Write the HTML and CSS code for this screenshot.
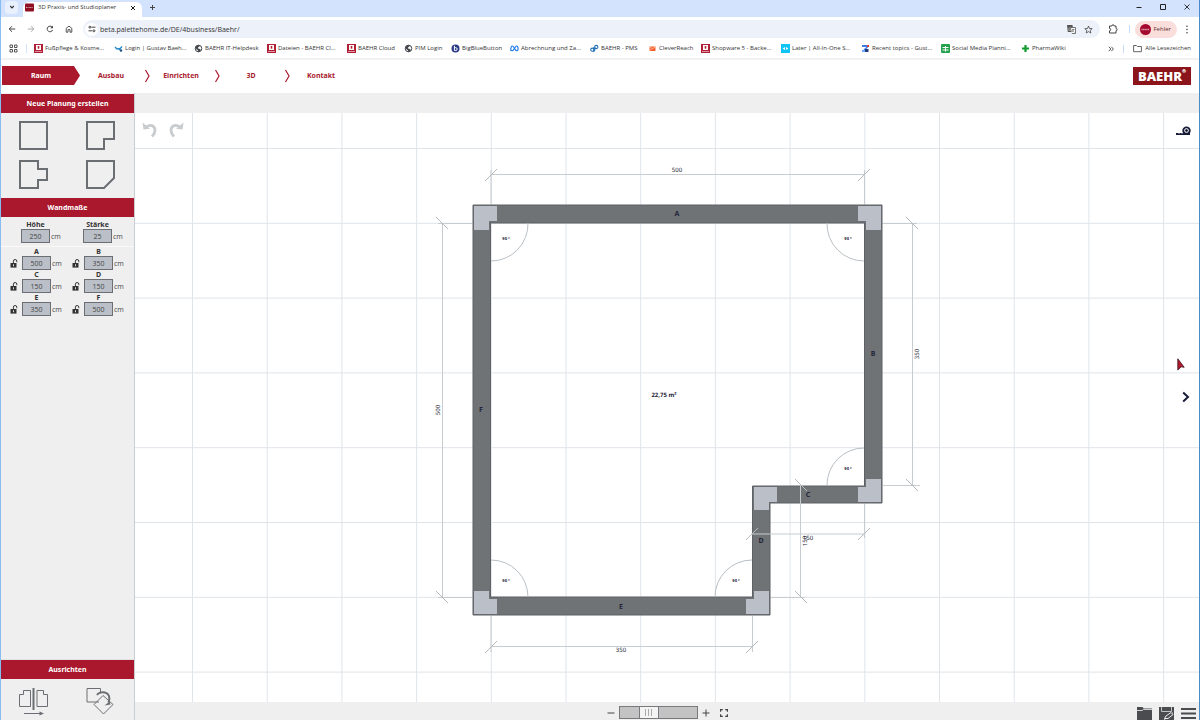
FILE: index.html
```html
<!DOCTYPE html>
<html lang="de">
<head>
  <meta charset="UTF-8" />
  <meta name="viewport" content="width=device-width, initial-scale=1.0" />
  <title>3D Praxis- und Studioplaner</title>
  <link rel="stylesheet" href="styles.css">
</head>
<body>
  <!-- shared icons -->
  <svg class="defs" width="0" height="0" aria-hidden="true">
    <symbol id="lock" viewBox="0 0 8 9"><path d="M3.4 4V2.2a1.7 1.7 0 0 1 3.4 0v1" fill="none" stroke="#333" stroke-width="1"/><path d="M.5 4h6v4.6h-6z" fill="#333"/><path d="M3 5.3h1v2H3z" fill="#ddd"/></symbol>
    <symbol id="baehr" viewBox="0 0 9 9"><path d="M0 0h9v9H0z" fill="#b01e36"/><path d="M2 1h5v5H2z" fill="#fff"/><path d="M3.7 2h1.6v2.7H3.7z" fill="#b01e36"/><path d="M1 7.5h7" stroke="#e6b5bc" stroke-width=".8"/></symbol>
    <symbol id="globe" viewBox="0 0 9 9"><circle cx="4.5" cy="4.5" r="3.3" fill="#fff" stroke="#45484d" stroke-width="1"/><path d="M1 3.5l2-2 2.3-.4.4 1.2-1.5.9-.2 1.2 2 .5.8 1.1-1.2 1.7-1.6.4-.1-1.8L2 5z" fill="#45484d"/></symbol>
    <symbol id="chevron" viewBox="0 0 8 14"><path d="M3.5 1L7 7l-3.5 6" fill="none" stroke="#a81a2d" stroke-width="1.2"/></symbol>
  </svg>

  <div class="tabs">
    <button class="tab-search" aria-label="Tabs durchsuchen"><svg width="6" height="6" viewBox="0 0 6 6"><path d="M1.2 2L3 3.9 4.8 2" fill="none" stroke="#333" stroke-width="1.1"/></svg></button>
    <div class="tab">
      <svg width="9" height="9" viewBox="0 0 9 9"><rect width="9" height="8" y=".5" rx="1" fill="#8e1024"/><path d="M1 4.5h7" stroke="#d9a0a8" stroke-width="1" stroke-dasharray="1 .4"/></svg>
      <span>3D Praxis- und Studioplaner</span>
      <button aria-label="Tab schließen"><svg width="6" height="6" viewBox="0 0 6 6"><path d="M1 1l4 4M5 1L1 5" stroke="#222" stroke-width="1"/></svg></button>
    </div>
    <button class="new-tab" aria-label="Neuer Tab"><svg width="7" height="7" viewBox="0 0 7 7"><path d="M3.5 1v5M1 3.5h5" stroke="#444" stroke-width="1"/></svg></button>
    <div class="win-buttons">
      <button aria-label="Minimieren"><svg width="8" height="8" viewBox="0 0 8 8"><path d="M1.5 4.5h5" stroke="#222"/></svg></button>
      <button aria-label="Maximieren"><svg width="8" height="8" viewBox="0 0 8 8"><path d="M1.5 1.5h5v5h-5z" fill="none" stroke="#222"/></svg></button>
      <button aria-label="Schließen"><svg width="8" height="8" viewBox="0 0 8 8"><path d="M1.5 1.5l5 5M6.5 1.5l-5 5" stroke="#222" stroke-width=".9"/></svg></button>
    </div>
  </div>

  <div class="toolbar">
    <button aria-label="Zurück"><svg width="8" height="8" viewBox="0 0 8 8"><path d="M7.2 4H1.3M4 1.2L1.2 4 4 6.8" fill="none" stroke="#444"/></svg></button>
    <button aria-label="Vor"><svg width="8" height="8" viewBox="0 0 8 8"><path d="M.8 4h5.9M4 1.2L6.8 4 4 6.8" fill="none" stroke="#aaa"/></svg></button>
    <button aria-label="Neu laden"><svg width="8" height="8" viewBox="0 0 8 8"><path d="M6.6 5A2.8 2.8 0 1 1 6.2 2.2" fill="none" stroke="#444"/><path d="M7 .6v2.7H4.3z" fill="#444"/></svg></button>
    <button aria-label="Startseite"><svg width="8" height="8" viewBox="0 0 8 8"><path d="M1.2 7.2V3.3L4 1.1l2.8 2.2v3.9H5V4.6H3v2.6z" fill="none" stroke="#444" stroke-width=".9"/></svg></button>
    <div class="address">
      <button class="site" aria-label="Website-Informationen"><svg width="8" height="8" viewBox="0 0 8 8"><g fill="none" stroke="#444"><path d="M3.5 2.2h4M.5 5.8H4"/><circle cx="1.9" cy="2.2" r="1"/><circle cx="5.9" cy="5.8" r="1"/></g></svg></button>
      <input type="text" aria-label="Adresse" value="beta.palettehome.de/DE/4business/Baehr/">
      <button aria-label="Übersetzen"><svg width="9" height="9" viewBox="0 0 9 9"><path d="M0 0h5.5l1 7H.8z" fill="#555"/><path d="M4 2.5h4.5v6H4.8" fill="#fff" stroke="#555" stroke-width=".8"/><path d="M4.4 3H1.8v2.5h2V4.3H3" fill="none" stroke="#ccc" stroke-width=".6"/><path d="M5 4.5h2.6M6.3 3.8v.8L5.1 7.2M5.5 5.3l2 1.9" fill="none" stroke="#555" stroke-width=".6"/></svg></button>
      <button aria-label="Lesezeichen"><svg width="9" height="9" viewBox="0 0 9 9"><path d="M4.5 1l1 2.5 2.7.2-2 1.7.6 2.6-2.3-1.4L2.2 8l.6-2.6-2-1.7 2.7-.2z" fill="none" stroke="#444" stroke-width=".8"/></svg></button>
    </div>
    <button class="extensions" aria-label="Erweiterungen"><svg width="10" height="10" viewBox="0 0 10 10"><path d="M1.5 2h2.3a1.2 1.2 0 0 1 2.4 0H8v2.500a1 1 0 0 1 0 2.200V9H1.500V6.800a1.200 1.200 0 0 0 0-2.400z" fill="none" stroke="#444" stroke-width="1"/></svg></button>
    <span class="divider"></span>
    <button class="profile"><svg width="11" height="11" viewBox="0 0 11 11"><circle cx="5.5" cy="5.5" r="5.5" fill="#a5062f"/><path d="M1.5 5.5h8" stroke="#dda0ae" stroke-width="1.4" stroke-dasharray="1.2 .4"/></svg>Fehler</button>
    <button class="menu" aria-label="Menü"><svg width="4" height="9" viewBox="0 0 4 9"><g fill="#444"><circle cx="2" cy="1.3" r=".8"/><circle cx="2" cy="4.5" r=".8"/><circle cx="2" cy="7.7" r=".8"/></g></svg></button>
  </div>

  <div class="bookmarks">
    <button class="apps" aria-label="Apps"><svg width="9" height="9" viewBox="0 0 9 9"><path d="M1 1h2.5v2.5H1zM5.5 1H8v2.5H5.5zM1 5.5h2.5V8H1zM5.5 5.5H8V8H5.5z" fill="none" stroke="#555" stroke-width="1"/></svg></button>
    <nav class="bookmark-list" aria-label="Lesezeichen">
      <a href="#"><svg width="9" height="9"><use href="#baehr"/></svg>Fußpflege &amp; Kosme...</a>
      <a href="#"><svg width="9" height="9" viewBox="0 0 9 9"><path d="M1 3l2 2 2.5-.5M5 6l3-3.5" fill="none" stroke="#2289c9" stroke-width="1.3"/><circle cx="7" cy="6.5" r="1.2" fill="#1a4f80"/></svg>Login | Gustav Baeh...</a>
      <a href="#"><svg width="9" height="9"><use href="#globe"/></svg>BAEHR IT-Helpdesk</a>
      <a href="#"><svg width="9" height="9"><use href="#baehr"/></svg>Dateien - BAEHR Cl...</a>
      <a href="#"><svg width="9" height="9"><use href="#baehr"/></svg>BAEHR Cloud</a>
      <a href="#"><svg width="9" height="9"><use href="#globe"/></svg>PIM Login</a>
      <a href="#"><svg width="9" height="9" viewBox="0 0 9 9"><circle cx="4.5" cy="4.5" r="4" fill="#2b3a87"/><path d="M3.4 1.8v4.7h1.4a1.4 1.4 0 0 0 0-2.8H3.4" fill="none" stroke="#fff" stroke-width="1"/></svg>BigBlueButton</a>
      <a href="#"><svg width="9" height="9" viewBox="0 0 9 9"><path d="M.7 6.3C.7 3.5 1.5 2 2.5 2c1.5 0 2.5 4.8 4.3 4.8 1.9 0 1.6-4.8-.3-4.8C5 2 4 6.8 2.2 6.8c-1 0-1.500-.2-1.500-1.300" fill="none" stroke="#1272e6" stroke-width="1.1"/></svg>Abrechnung und Za...</a>
      <a href="#"><svg width="9" height="9" viewBox="0 0 9 9"><g fill="none" stroke="#2471b5" stroke-width="1.1"><circle cx="2.3" cy="5.7" r="1.6"/><circle cx="6.3" cy="3" r="1.6"/><path d="M3.9 5.5V3M4.7 3.5v2.8L3.5 8"/></g></svg>BAEHR - PMS</a>
      <a href="#"><svg width="9" height="9" viewBox="0 0 9 9"><path d="M1.5 2.5h6V7h-6z" fill="#f4602c"/><path d="M1.5 3l3 1.6 3-1.6M1.5 6.5l2-1.5" fill="none" stroke="#ffd0be" stroke-width=".7"/></svg>CleverReach</a>
      <a href="#"><svg width="9" height="9"><use href="#baehr"/></svg>Shopware 5 - Backe...</a>
      <a href="#"><svg width="9" height="9" viewBox="0 0 9 9"><path d="M0 0h9v9H0z" fill="#10c4f5"/><path d="M4 3L1.6 4.5 4 6M5 3l2.400 1.500L5 6" fill="#fff"/></svg>Later | All-In-One S...</a>
      <a href="#"><svg width="9" height="9" viewBox="0 0 9 9"><path d="M1 1h5v2H1z" fill="#3f7ee8"/><path d="M6 1h2v2H6z" fill="#e2382e"/><path d="M6.5 3L3 6" stroke="#3f7ee8" stroke-width="1.6"/><path d="M1 6h3v2H1z" fill="#6ca8ff"/><path d="M4 5h3.5v3H4z" fill="#243c7c"/></svg>Recent topics - Gust...</a>
      <a href="#"><svg width="9" height="9" viewBox="0 0 9 9"><rect width="9" height="9" rx="1" fill="#23a14c"/><path d="M1.5 3.5h6M1.5 6h6M4.5 2v5.5" stroke="#fff" stroke-width="1"/></svg>Social Media Planni...</a>
      <a href="#"><svg width="9" height="9" viewBox="0 0 9 9"><path d="M4.5 1v7M1 4.5h7" stroke="#119b2e" stroke-width="2.2"/></svg>PharmaWiki</a>
    </nav>
    <button class="more" aria-label="Weitere Lesezeichen"><svg width="6" height="6" viewBox="0 0 6 6"><path d="M.8.8L2.9 3 .8 5.2M3.3.8L5.4 3 3.3 5.2" fill="none" stroke="#444" stroke-width=".9"/></svg></button>
    <span class="divider"></span>
    <a class="all-bookmarks" href="#"><svg width="9" height="9" viewBox="0 0 9 9"><path d="M.6 1.5h2.8l1 1h4v5.2H.6z" fill="none" stroke="#555" stroke-width=".9"/></svg>Alle Lesezeichen</a>
  </div>

  <header class="header">
    <nav class="steps">
      <a class="active" href="#">Raum</a>
      <a href="#">Ausbau</a>
      <svg width="8" height="14"><use href="#chevron"/></svg>
      <a href="#">Einrichten</a>
      <svg width="8" height="14"><use href="#chevron"/></svg>
      <a href="#">3D</a>
      <svg width="8" height="14"><use href="#chevron"/></svg>
      <a href="#">Kontakt</a>
    </nav>
    <a class="logo" href="#">BAEHR<sup>®</sup></a>
  </header>

  <div class="planner">
    <aside class="sidebar">
      <h2>Neue Planung erstellen</h2>
      <div class="shapes">
        <button aria-label="Rechteck"><svg width="29" height="29" viewBox="0 0 29 29"><path d="M1 1h27v27H1z"/></svg></button>
        <button aria-label="L-Form"><svg width="29" height="29" viewBox="0 0 29 29"><path d="M1 1h27v17H18v10H1z"/></svg></button>
        <button aria-label="T-Form"><svg width="29" height="29" viewBox="0 0 29 29"><path d="M1 1h18v8h9v11h-9v8H1z"/></svg></button>
        <button aria-label="Schräge"><svg width="29" height="29" viewBox="0 0 29 29"><path d="M1 1h27v17L18 28H1z"/></svg></button>
      </div>

      <h2>Wandmaße</h2>
      <div class="fields general">
        <div class="field"><label for="hoehe">Höhe</label><input id="hoehe" type="text" value="250"><span>cm</span></div>
        <div class="field"><label for="staerke">Stärke</label><input id="staerke" type="text" value="25"><span>cm</span></div>
      </div>
      <div class="fields">
        <div class="field"><label for="wallA">A</label><svg width="8" height="9"><use href="#lock"/></svg><input id="wallA" type="text" value="500"><span>cm</span></div>
        <div class="field"><label for="wallB">B</label><svg width="8" height="9"><use href="#lock"/></svg><input id="wallB" type="text" value="350"><span>cm</span></div>
        <div class="field"><label for="wallC">C</label><svg width="8" height="9"><use href="#lock"/></svg><input id="wallC" type="text" value="150"><span>cm</span></div>
        <div class="field"><label for="wallD">D</label><svg width="8" height="9"><use href="#lock"/></svg><input id="wallD" type="text" value="150"><span>cm</span></div>
        <div class="field"><label for="wallE">E</label><svg width="8" height="9"><use href="#lock"/></svg><input id="wallE" type="text" value="350"><span>cm</span></div>
        <div class="field"><label for="wallF">F</label><svg width="8" height="9"><use href="#lock"/></svg><input id="wallF" type="text" value="500"><span>cm</span></div>
      </div>

      <div class="align">
        <h2>Ausrichten</h2>
        <div class="shapes thin">
          <button aria-label="Spiegeln"><svg width="29" height="29" viewBox="0 0 29 29"><path d="M11.5 3.5v16H.5v-12h4v-4zM18 3.5v16h10.5v-12h-4v-4z"/><path d="M14.5 1v22" stroke-width="2.5"/><path d="M5 26.5h17"/><path d="M20.5 24.5l4.5 2-4.5 2z" fill="#6b6e73" stroke="none"/></svg></button>
          <button aria-label="Drehen"><svg width="29" height="29" viewBox="0 0 29 29"><path d="M13 15H1V1.5h13.5v5M17 8.5l10 9-9.5 9.5L8 17.500z"/><path d="M11 8c1-2 4.500-3.500 8-2.500 4 1 5.500 5 3.500 10" stroke-width="2"/><path d="M18.500 18.500l5-4 1 3z" fill="#6b6e73" stroke="none"/></svg></button>
        </div>
      </div>
    </aside>

    <main class="workspace">
      <div class="canvas">
        <svg class="plan" viewBox="135 113 1064 589" preserveAspectRatio="xMidYMid slice">
          <defs>
            <pattern id="grid" x="192" y="148" width="74.7" height="74.8" patternUnits="userSpaceOnUse">
              <path d="M.5 0v74.8M0 .5h74.7" stroke="#dfe4e9" stroke-width="1"/>
            </pattern>
          </defs>
          <rect x="-500" y="-500" width="3000" height="2000" fill="url(#grid)"/>

          <!-- walls -->
          <path class="walls" d="M473 205h409v298H770v112H473zM490.5 223v374h262V486h112V223z" fill-rule="evenodd"/>
          <path class="corners" d="M474 206h23v15h-8v9h-15zM858 206h23v24h-15v-9h-8zM866 479h15v23h-23v-15h8zM754 487h23v15h-8v8h-15zM754 591h15v23h-23v-15h8zM474 591h15v8h8v15h-23z"/>

          <!-- corner angles -->
          <g class="angles">
            <path d="M528 223a37 37 0 0 1-37 38M827 223a37 37 0 0 0 37 38M827 485a37 37 0 0 1 37-37M715 597a37 37 0 0 1 37-37M528 597a37 37 0 0 0-37-37"/>
          </g>
          <g class="angle-text">
            <text x="506" y="240">90 °</text>
            <text x="848" y="240">90 °</text>
            <text x="848" y="470">90 °</text>
            <text x="736" y="582">90 °</text>
            <text x="506" y="582">90 °</text>
          </g>

          <!-- dimension lines -->
          <g class="dims">
            <path d="M491 174.5h373M491 646.5h262M442.5 223v374M912.5 223v262M752 534h112M800.5 485v112"/>
            <path d="M491 170v34M864.5 170v34M438 223.5h34M883 223.5h34M883 485.5h37M438 597.5h34M771 597.5h34M491 616v36M752.5 616v36M864.5 504v34"/>
            <path class="ticks" d="M485 181l12-12M858 181l12-12M485 653l12-12M746 653l12-12M436 217l12 12M436 591l12 12M906 217l12 12M906 479l12 12M795 479l12 12M795 591l12 12M746 540l12-12M858 540l12-12"/>
          </g>
          <g class="dim-text">
            <text x="677" y="172">500</text>
            <text x="621" y="652">350</text>
            <text x="808" y="540">150</text>
            <text transform="translate(440 410) rotate(-90)">500</text>
            <text transform="translate(919 354) rotate(-90)">350</text>
            <text transform="translate(807 541) rotate(-90)">150</text>
          </g>
          <g class="wall-text">
            <text x="677" y="216">A</text>
            <text x="873" y="356">B</text>
            <text x="808" y="497">C</text>
            <text x="761" y="543">D</text>
            <text x="621" y="609">E</text>
            <text x="481" y="412">F</text>
          </g>
          <text class="area" x="664" y="397">22,75 m²</text>
        </svg>

        <div class="history">
          <button aria-label="Rückgängig"><svg width="16" height="16" viewBox="0 0 16 16"><path d="M3.5 5.5C8 1.5 13 3.5 13 8.5c0 2.5-1.5 4.5-3 6" fill="none" stroke="#c9cccf" stroke-width="2.8"/><path d="M.5.5l1 7L8 6.8z" fill="#c9cccf"/></svg></button>
          <button aria-label="Wiederholen"><svg width="16" height="16" viewBox="0 0 16 16"><path d="M12.5 5.5C8 1.5 3 3.5 3 8.5c0 2.5 1.5 4.5 3 6" fill="none" stroke="#c9cccf" stroke-width="2.8"/><path d="M15.5.5l-1 7L8 6.8z" fill="#c9cccf"/></svg></button>
        </div>
        <button class="measure" aria-label="Messen"><svg width="15" height="10" viewBox="0 0 15 10"><circle cx="10.5" cy="4.7" r="4.2" fill="#171c36"/><path d="M9 6h5v3H9z" fill="#171c36"/><circle cx="10.5" cy="4.5" r="1.9" fill="none" stroke="#fff" stroke-width="1"/><path d="M0 8h9" stroke="#171c36" stroke-width="2"/><path d="M3 6.5V8M6 6.5V8" stroke="#fff" stroke-width=".7"/></svg></button>
        <svg class="pointer" width="8" height="13" viewBox="0 0 8 13"><path d="M.8.8l6.4 8.5-3-.5L.8 12z" fill="#b3182f" stroke="#3b1018" stroke-width=".8"/></svg>
        <button class="next" aria-label="Katalog öffnen"><svg width="8" height="12" viewBox="0 0 8 12"><path d="M1.2 1.5L6 6l-4.8 4.5" fill="none" stroke="#171c36" stroke-width="2"/></svg></button>
      </div>

      <footer class="footer">
        <div class="zoom">
          <button aria-label="Verkleinern"><svg width="8" height="8" viewBox="0 0 8 8"><path d="M.5 4h7" stroke="#444"/></svg></button>
          <input type="range" aria-label="Zoom" min="0" max="100" value="34">
          <button aria-label="Vergrößern"><svg width="8" height="8" viewBox="0 0 8 8"><path d="M.5 4h7M4 .5v7" stroke="#444"/></svg></button>
          <button class="fit" aria-label="Einpassen"><svg width="8" height="8" viewBox="0 0 8 8"><path d="M.6 2.8V.6h2.2M5.2.6h2.2v2.2M7.4 5.2v2.2H5.2M2.8 7.4H.6V5.2" fill="none" stroke="#444" stroke-width="1.2"/></svg></button>
        </div>
        <div class="files">
          <button aria-label="Öffnen"><svg width="15" height="14" viewBox="0 0 15 14"><path d="M0 1h5.5l1.2 1.5H15V14H0z" fill="#4b4c50"/><path d="M0 4.5h5l1.5-1H15" fill="none" stroke="#efefef" stroke-width=".8"/></svg></button>
          <button aria-label="Speichern"><svg width="15" height="14" viewBox="0 0 15 14"><path d="M0 1h15v13H0z" fill="#4b4c50"/><path d="M2.5 1v4.5h10V1M5 14l9-7.500" fill="none" stroke="#cfcfd1" stroke-width=".9"/><path d="M5.500 12.500l1.500-2.500 5-3.500 2 2-5 4z" fill="#4b4c50" stroke="#efefef" stroke-width="1"/></svg></button>
          <button aria-label="Menü"><svg width="15" height="14" viewBox="0 0 15 14"><path d="M0 3h15M0 7.5h15M0 12h15" stroke="#4b4c50" stroke-width="2"/></svg></button>
        </div>
      </footer>
    </main>
  </div>
</body>
</html>
```
FILE: styles.css
```css
* { box-sizing: border-box; }
body {
  margin: 0;
  height: 100vh;
  display: flex;
  flex-direction: column;
  overflow: hidden;
  border-left: 1px solid #86bdf2;
  border-right: 1px solid #4a8cc8;
  background: #fff;
  font-family: "Noto Sans", "Open Sans", sans-serif;
  font-size: 7px;
  line-height: 9px;
  color: #333;
}
svg { display: block; flex: none; }
.defs { position: absolute; }
a { color: inherit; text-decoration: none; }
button {
  display: flex;
  align-items: center;
  justify-content: center;
  flex: none;
  padding: 0;
  border: 0;
  background: none;
  font: inherit;
  color: inherit;
}
.divider { width: 1px; height: 8px; background: #c5dcf8; }

/* browser window */
.tabs, .toolbar, .bookmarks {
  display: flex;
  align-items: center;
  flex: none;
  font-family: "Open Sans", sans-serif;
  font-size: 6px;
}
.tabs { height: 17px; padding: 0 8px 3px 4px; background: #d3e3fd; }
.tab-search { width: 13px; height: 13px; border-radius: 4px; background: #e9f1fe; }
.tab {
  display: flex;
  align-items: center;
  align-self: flex-end;
  gap: 4px;
  width: 119px;
  height: 15px;
  margin-left: 5px;
  margin-bottom: -3px;
  padding: 0 6px 4px 2px;
  border-radius: 6px 6px 0 0;
  background: #fff;
}
.tab span { flex: 1; white-space: nowrap; }
.new-tab { margin-left: 7px; }
.win-buttons { display: flex; gap: 16px; margin-left: auto; }

.toolbar { height: 24px; gap: 11px; padding: 0 10px 0 7px; }
.address {
  display: flex;
  align-items: center;
  flex: 1;
  gap: 8px;
  height: 18px;
  margin-left: -1px;
  padding: 0 7px 0 2px;
  border-radius: 9px;
  background: #edf1fa;
}
.site { width: 13px; height: 13px; border-radius: 7px; background: #fff; }
.address input {
  flex: 1;
  min-width: 0;
  margin-left: -6px;
  padding: 0;
  border: 0;
  background: none;
  font: 7px/9px "Open Sans", sans-serif;
  color: #333;
}
.extensions, .menu { margin-left: -3px; }
.profile {
  gap: 3px;
  height: 17px;
  margin-left: -6px;
  padding: 0 6px 0 5px;
  border-radius: 9px;
  background: #f9dedc;
  color: #5c2b2b;
}

.bookmarks {
  height: 19px;
  padding: 0 8px 2px 8px;
  border-bottom: 2px solid #f2f2f2;
  color: #333;
}
.bookmark-list {
  display: grid;
  grid-template-columns: 80px 80px 73px 80px 57px 47px 59px 80px 58px 53px 80px 80px 80px 80px auto;
  margin-left: 8px;
  padding-left: 7px;
  border-left: 1px solid #d3e3fd;
}
.bookmark-list a, .all-bookmarks {
  display: flex;
  align-items: center;
  gap: 2px;
  white-space: nowrap;
}
.more { margin-left: auto; margin-right: 9px; }
.all-bookmarks { margin-left: 9px; gap: 3px; }

/* planner header */
.header {
  display: flex;
  align-items: center;
  justify-content: space-between;
  flex: none;
  height: 33px;
  padding: 0 8px 2px 1px;
}
.steps {
  display: flex;
  align-items: center;
  font-weight: bold;
  text-align: center;
  color: #a81a2d;
}
.steps a { width: 62px; }
.steps .active {
  width: 78px;
  line-height: 19px;
  background: #a9182c;
  color: #fff;
  clip-path: polygon(0 0, calc(100% - 6px) 0, 100% 50%, calc(100% - 6px) 100%, 0 100%);
}
.logo {
  display: flex;
  justify-content: center;
  width: 58px;
  background: #8b151a;
  color: #fff;
  font: 800 13px/18px "Open Sans", sans-serif;
}
.logo sup { font-size: 5px; line-height: 9px; }

/* planner */
.planner { display: flex; flex: 1; min-height: 0; }
.sidebar {
  display: flex;
  flex-direction: column;
  width: 134px;
  padding-top: 1px;
  border-right: 1px solid #c9ced4;
  background: #efefef;
}
.sidebar h2 {
  margin: 0;
  background: #a9182c;
  color: #fff;
  font-size: 7px;
  line-height: 19px;
  text-align: center;
}
.shapes {
  display: grid;
  grid-template-columns: 29px 29px;
  gap: 10px 38px;
  padding: 8px 18px 9px;
}
.shapes path { fill: none; stroke: #6b6e73; stroke-width: 2; }
.shapes.thin path { stroke-width: 1; }
.shapes.thin path[stroke-width] { stroke-width: 2; }
.shapes.thin path[fill] { fill: #6b6e73; stroke: none; }

.fields {
  display: grid;
  grid-template-columns: 62px 62px;
  padding: 0 0 0 9px;
}
.general { padding: 3px 0 3px 8px; border-bottom: 1px solid #fafafa; }
.field {
  display: grid;
  grid-template-columns: 8px 29px 9px;
  grid-template-rows: 9px 14px;
  column-gap: 4px;
  align-items: center;
}
.field label { grid-column: 2; justify-self: center; font-weight: bold; }
.field svg { grid-row: 2; grid-column: 1; }
.field input {
  grid-row: 2;
  grid-column: 2;
  width: 29px;
  height: 14px;
  padding: 0;
  border: 1px solid #6b6e73;
  background: #bbc0c8;
  color: #444;
  font: 7px/12px "Open Sans", sans-serif;
  text-align: center;
}
.field span { grid-row: 2; grid-column: 3; margin-left: -3px; color: #555; }
.align { margin-top: auto; padding-bottom: 4px; border-top: 1px solid #e0e3e6; }
.align .shapes { padding-bottom: 0; }

.workspace {
  display: flex;
  flex: 1;
  flex-direction: column;
  min-width: 0;
  padding-top: 20px;
  background: #efefef;
}
.canvas { position: relative; flex: 1; min-height: 0; background: #fff; }
.plan { width: 100%; height: 100%; }
.walls { fill: #6f7376; stroke: #5e6165; stroke-width: 1; }
.corners { fill: #bbc0c8; }
.angles path, .dims path { fill: none; stroke: #b9bfc5; stroke-width: 1; }
.dims path { stroke: #c6cccf; }
.dims .ticks { stroke: #b5babd; }
.plan text {
  text-anchor: middle;
  text-rendering: geometricPrecision;
  font-size: 6px;
  fill: #222436;
}
.plan .angle-text text { font-size: 4px; font-weight: bold; }
.plan .wall-text text { font-size: 7px; font-weight: bold; }
.plan .area { font-weight: bold; }

.history { position: absolute; top: 9px; left: 7px; display: flex; gap: 10px; }
.measure { position: absolute; top: 13px; right: 8px; }
.pointer { position: absolute; top: 245px; right: 14px; }
.next { position: absolute; top: 278px; right: 9px; }

.footer {
  display: grid;
  grid-template-columns: 1fr auto 1fr;
  align-items: center;
  height: 18px;
  padding: 3px 3px 0;
}
.zoom { display: flex; align-items: center; grid-column: 2; gap: 4px; }
.fit { margin-left: 6px; }
.zoom input {
  appearance: none;
  width: 79px;
  height: 13px;
  margin: 0;
  border: 1px solid #77797c;
  background: #c3c3c3;
}
.zoom input::-webkit-slider-thumb {
  appearance: none;
  width: 20px;
  height: 11px;
  border: 1px solid #77797c;
  border-width: 0 1px;
  background:
    linear-gradient(#aaa, #aaa) 5px 2px / 1px 7px no-repeat,
    linear-gradient(#aaa, #aaa) 8px 2px / 1px 7px no-repeat,
    linear-gradient(#aaa, #aaa) 11px 2px / 1px 7px no-repeat,
    #f4f4f4;
}
.files { display: flex; justify-content: flex-end; gap: 7px; }
```
